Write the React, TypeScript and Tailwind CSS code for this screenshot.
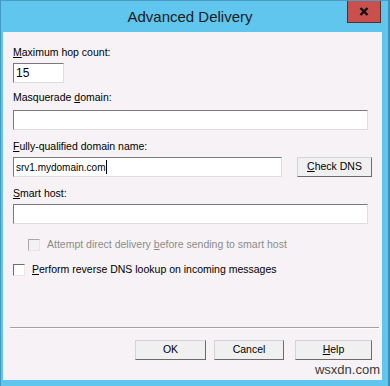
import React from "react"

const font = { fontFamily: '"Liberation Sans", Arial, sans-serif' }

function Label({ children }: { children: React.ReactNode }) {
  return <div className="h-[13px] text-[10.5px] leading-[13px] text-[#000]">{children}</div>
}

function TextBox({ className, children }: { className: string; children?: React.ReactNode }) {
  return (
    <div
      className={`h-[20px] bg-white border border-t-[#7a7a7a] border-l-[#7a7a7a] border-r-[#dedede] border-b-[#dedede] pl-[2px] flex items-center text-[10px] text-black ${className}`}
    >
      {children}
    </div>
  )
}

function Button({ className, children }: { className: string; children: React.ReactNode }) {
  return (
    <div
      className={`h-[20px] flex items-center justify-center bg-[#f0f0f0] border border-t-[#d4d4d4] border-l-[#d4d4d4] border-r-[#6c6c6c] border-b-[#6c6c6c] text-[10.5px] text-black ${className}`}
    >
      {children}
    </div>
  )
}

function CheckBox({ disabled }: { disabled?: boolean }) {
  return (
    <div
      className={`w-[12px] h-[12px] border ${
        disabled
          ? "border-t-[#a8a8a8] border-l-[#a8a8a8] border-r-[#e6e6e6] border-b-[#e6e6e6] bg-[#f3f1f3]"
          : "border-t-[#6e6e6e] border-l-[#6e6e6e] border-r-[#e8e8e8] border-b-[#e8e8e8] bg-white"
      }`}
    />
  )
}

export default function App() {
  return (
    <div style={font} className="w-[390px] h-[386px] bg-[#60c6ee] flex flex-col border-t border-t-[#4a9cc4] border-l border-l-[#4499c2] border-r-2 border-r-[#3f8fb8] overflow-hidden">
      <div className="relative h-[31px] shrink-0 flex items-center justify-center pr-[9px] pt-[1px]">
        <span className="text-[15px] text-[#1c1c1c]">Advanced Delivery</span>
        <div className="absolute right-[7px] top-[-1px] w-[34px] h-[23px] bg-[#c9504c] border border-[#53302f] border-t-0 flex items-center justify-center">
          <svg width="10" height="9" viewBox="0 0 10 9">
            <path d="M1.5 1 L8.5 8 M8.5 1 L1.5 8" stroke="#111" strokeWidth="2.4" />
          </svg>
        </div>
      </div>
      <div className="ml-[2px] mr-[6px] h-[348px] bg-[#f6f2f5] flex flex-col pl-[10px]">
        <div className="mt-[14px]">
          <Label>
            <u>M</u>aximum hop count:
          </Label>
        </div>
        <TextBox className="mt-[4px] w-[51px] text-[12px]">15</TextBox>
        <div className="mt-[8px]">
          <Label>
            Masquerade <u>d</u>omain:
          </Label>
        </div>
        <TextBox className="mt-[6px] w-[355px]" />
        <div className="mt-[10px]">
          <Label>
            <u>F</u>ully-qualified domain name:
          </Label>
        </div>
        <div className="mt-[4px] flex items-start">
          <TextBox className="w-[269px] h-[19px]">
            <span>srv1.mydomain.com</span>
            <span className="ml-[1px] w-[1px] h-[14px] bg-black" />
          </TextBox>
          <Button className="ml-[15px] w-[75px]">
            <span>
              <u>C</u>heck DNS
            </span>
          </Button>
        </div>
        <div className="mt-[10px]">
          <Label>
            <u>S</u>mart host:
          </Label>
        </div>
        <TextBox className="mt-[4px] w-[355px]" />
        <div className="mt-[14px] ml-[15px] h-[13px] flex items-center gap-[7px]">
          <CheckBox disabled />
          <span className="text-[10.5px] text-[#8c8c8c]">
            Attempt direct delivery <u>b</u>efore sending to smart host
          </span>
        </div>
        <div className="mt-[12px] h-[13px] flex items-center gap-[7px]">
          <CheckBox />
          <span className="text-[10.5px] text-black">
            <u>P</u>erform reverse DNS lookup on incoming messages
          </span>
        </div>
        <div className="mt-[51px] ml-[-3px] mr-[3px] border-t border-t-[#a2a2a2] border-b border-b-white" />
        <div className="mt-[11px] flex justify-end pr-[10px]">
          <Button className="w-[71px]">OK</Button>
          <Button className="ml-[8px] w-[70px]">Cancel</Button>
          <Button className="ml-[11px] w-[77px]">
            <span>
              <u>H</u>elp
            </span>
          </Button>
        </div>
        <div className="mt-[3px] flex justify-end pr-[2px] h-[14px] text-[13px] leading-[14px] text-[#3a3a3a]">wsxdn.com</div>
      </div>
    </div>
  )
}
